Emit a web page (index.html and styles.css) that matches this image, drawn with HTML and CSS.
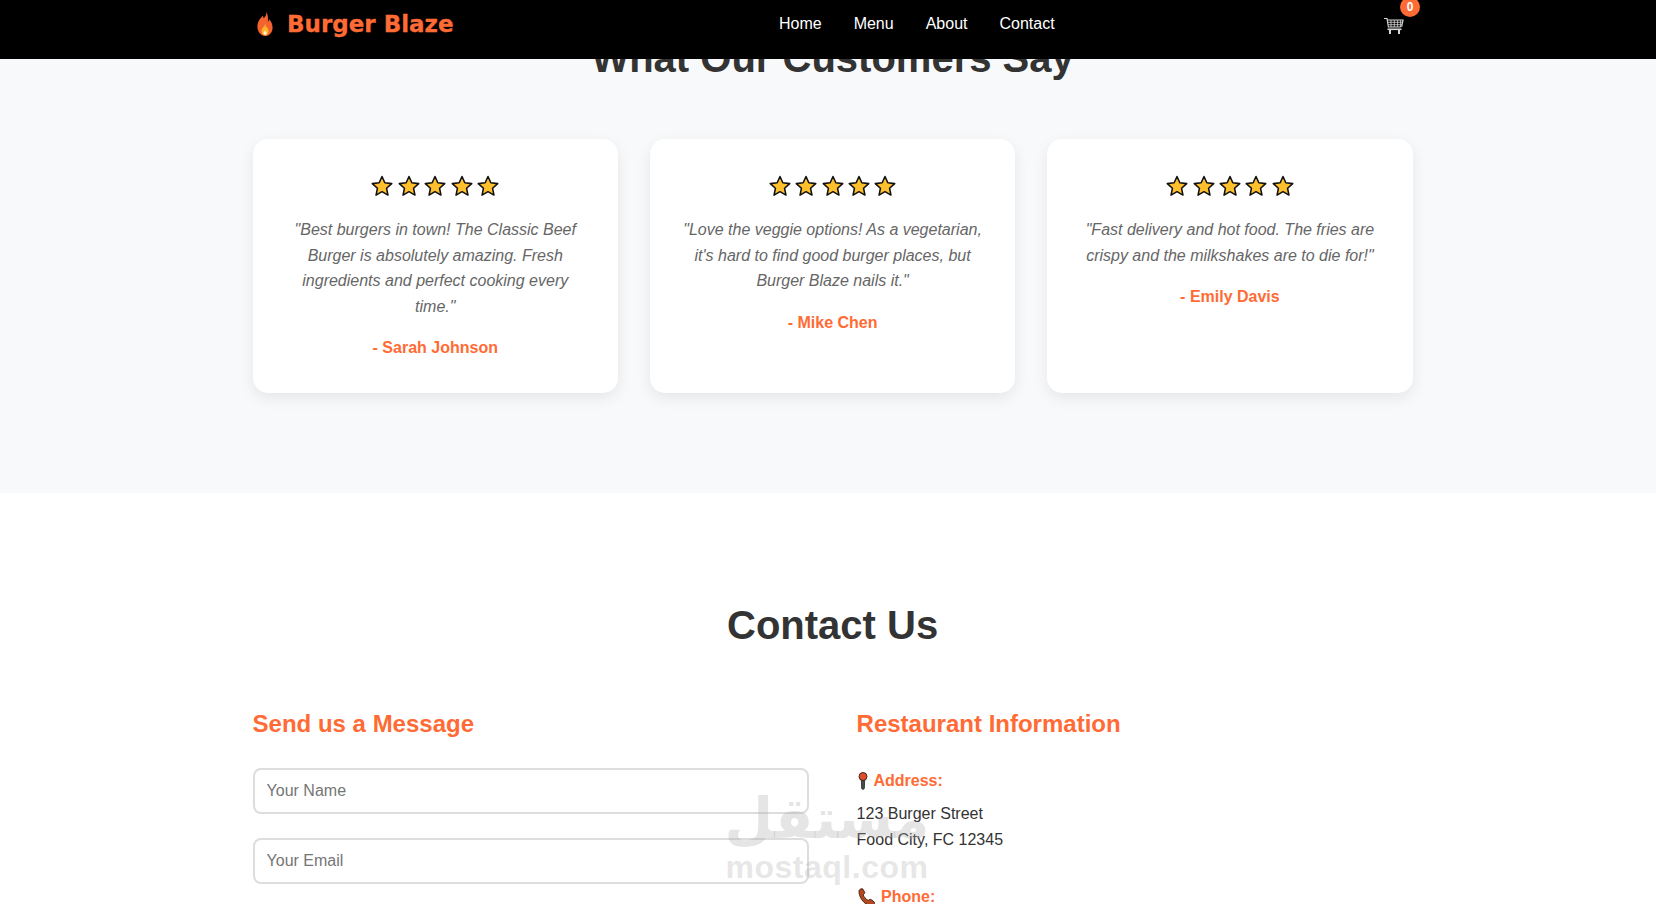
FILE: index.html
```html
<!DOCTYPE html>
<html lang="en">

<head>
    <meta charset="utf-8">
    <meta name="viewport" content="width=device-width, initial-scale=1.0">
    <title>Burger Blaze</title>
    <link rel="stylesheet" href="styles.css">
</head>

<body>
    <svg class="defs" width="0" height="0">
        <symbol id="star" viewBox="0 0 24 24">
            <path d="M12 1.6l3.1 6.9 7.5.9-5.6 5.1 1.500 7.4L12 18.2l-6.5 3.7L7 14.5 1.4 9.4l7.5-.9z" fill="#ffc02e" stroke="#111" stroke-width="1.7" stroke-linejoin="round" />
        </symbol>
    </svg>

    <header>
        <div class="bar">
            <a class="logo" href="#">
                <svg class="flame" viewBox="0 0 16 24">
                    <path d="M9.2 0c.5 3-1 4.600-2.400 6.300C6.300 5.400 6 4.700 6 3.800 3 6.400.4 10 .4 14.600.4 20 3.900 24 8 24s7.600-3.600 7.600-8.600c0-3.700-1.700-6-3.300-8.200-.3 1.100-.7 1.900-1.400 2.500C11.200 6.200 11 2.600 9.200 0z" fill="#f4622d" />
                    <path d="M8.200 11.500c.2 2-1.900 3.100-3.200 5.600-1.200 2.500.3 6.100 3 6.100s4.300-2.900 3.300-5.500c-.5-1.300-1.200-2-1.600-3.100-.3.500-.6.800-1 1 .2-1.600 0-3-.5-4.100z" fill="#fdb72f" />
                    <path d="M8 18.500c-1 1.200-2 2.400-1.400 3.700.4.800 2.400.8 2.900 0 .6-1.300-.6-2.500-1.500-3.700z" fill="#fff3d2" />
                </svg>
                <span>Burger Blaze</span>
            </a>
            <nav>
                <a href="#">Home</a>
                <a href="#">Menu</a>
                <a href="#">About</a>
                <a href="#">Contact</a>
            </nav>
            <a class="cart" href="#">
                <svg class="cart-icon" viewBox="0 0 20 18" fill="none" stroke="#d6d6d6" stroke-width="1.200">
                    <path d="M0 1.500h3l1.400 8.500h12.400" />
                    <path d="M3.300 3h15.700l-1.400 6.800" />
                    <path d="M3.800 5.300h14.600M4.200 7.700h13.700M7 3v7M10.300 3v7M13.600 3v7M16.600 3v7" stroke-width=".8" />
                    <path d="M3.500 12.300h14" stroke-width="1.600" />
                    <path d="M6 12.500v4.500M15 12.500v4.500" stroke-width="2" />
                </svg>
                <span class="badge">0</span>
            </a>
        </div>
    </header>

    <main>
        <section class="testimonials">
            <div class="wrap">
                <h2>What Our Customers Say</h2>
                <div class="cards">
                    <article class="card">
                        <div class="stars">
                            <svg><use href="#star" /></svg>
                            <svg><use href="#star" /></svg>
                            <svg><use href="#star" /></svg>
                            <svg><use href="#star" /></svg>
                            <svg><use href="#star" /></svg>
                        </div>
                        <p class="quote">"Best burgers in town! The Classic Beef Burger is absolutely amazing. Fresh ingredients and perfect cooking every time."</p>
                        <p class="author">- Sarah Johnson</p>
                    </article>
                    <article class="card">
                        <div class="stars">
                            <svg><use href="#star" /></svg>
                            <svg><use href="#star" /></svg>
                            <svg><use href="#star" /></svg>
                            <svg><use href="#star" /></svg>
                            <svg><use href="#star" /></svg>
                        </div>
                        <p class="quote">"Love the veggie options! As a vegetarian, it's hard to find good burger places, but Burger Blaze nails it."</p>
                        <p class="author">- Mike Chen</p>
                    </article>
                    <article class="card">
                        <div class="stars">
                            <svg><use href="#star" /></svg>
                            <svg><use href="#star" /></svg>
                            <svg><use href="#star" /></svg>
                            <svg><use href="#star" /></svg>
                            <svg><use href="#star" /></svg>
                        </div>
                        <p class="quote">"Fast delivery and hot food. The fries are crispy and the milkshakes are to die for!"</p>
                        <p class="author">- Emily Davis</p>
                    </article>
                </div>
            </div>
        </section>

        <section class="contact">
            <div class="wrap">
                <h2>Contact Us</h2>
                <div class="columns">
                    <form>
                        <h3>Send us a Message</h3>
                        <input type="text" placeholder="Your Name">
                        <input type="email" placeholder="Your Email">
                    </form>
                    <div class="info">
                        <h3>Restaurant Information</h3>
                        <div class="info-block">
                            <p class="label">
                                <svg class="pin" viewBox="0 0 10 18">
                                    <path d="M3.300 7.500h3.400l-.4 9c0 1-2.600 1-2.600 0z" fill="#4c4a50" stroke="#222" stroke-width=".8" />
                                    <circle cx="5" cy="4.500" r="4" fill="#d9512c" stroke="#3a1c14" stroke-width=".9" />
                                </svg>
                                Address:
                            </p>
                            <p>123 Burger Street<br>Food City, FC 12345</p>
                        </div>
                        <div class="info-block">
                            <p class="label">
                                <svg class="phone" viewBox="0 0 18 18">
                                    <path d="M1.200 2.200C2 .9 4 .3 5 1.200l1.700 3.200c.3.700-.2 1.300-1.500 2.300.8 2.300 2.400 4.300 5 5.800 1-1 1.900-1.400 2.700-1l3.100 2.200c1 .8.600 2.700-.6 3.600-1.700 1.200-4.900.5-8.200-2C3.500 12.600.2 6.500 1.200 2.200z" fill="#b5481f" stroke="#3a1a0c" stroke-width=".9" />
                                </svg>
                                Phone:
                            </p>
                            <p>(555) 123-BURGER</p>
                        </div>
                    </div>
                </div>
            </div>
            <div class="watermark">
                <span class="wm-ar" lang="ar" dir="rtl">مستقل</span>
                <span class="wm-en">mostaql.com</span>
            </div>
        </section>
    </main>
</body>

</html>
```

FILE: styles.css
```css
* {
    margin: 0;
    padding: 0;
    box-sizing: border-box;
}

html,
body {
    height: 904px;
    overflow: hidden;
}

body {
    font-family: "Liberation Sans", Arial, sans-serif;
    line-height: 1.6;
    color: #333;
    background-color: #fff;
}

.defs {
    position: absolute;
}

a {
    color: inherit;
    text-decoration: none;
}

/* sticky bar, the page is scrolled under it */
header {
    position: fixed;
    top: 0;
    left: 0;
    right: 0;
    z-index: 10;
    height: 59px;
    background-color: #000;
    padding-left: 10px;
}

.bar {
    width: 1160px;
    height: 48px;
    margin: auto;
    display: flex;
    justify-content: space-between;
    align-items: center;
}

.logo {
    display: flex;
    align-items: center;
    gap: 14px;
    padding-left: 4px;
    color: #ff6b35;
    font-family: "DejaVu Sans", sans-serif;
    font-size: 23px;
    font-weight: bold;
    -webkit-text-stroke: .3px #ff6b35;
}

.logo span {
    margin-top: 1px;
}

.flame {
    width: 16px;
    height: 24px;
}

nav {
    display: flex;
    gap: 32px;
    margin-top: 0;
    color: #fff;
    font-size: 16px;
}

.cart {
    position: relative;
    display: block;
    width: 33px;
    height: 24px;
    margin-top: 6px;
}

.cart-icon {
    position: absolute;
    left: 4px;
    top: 2px;
    width: 20px;
    height: 18px;
}

.badge {
    position: absolute;
    left: 20px;
    top: -18px;
    width: 20px;
    height: 20px;
    border-radius: 50%;
    background-color: #ff6b35;
    color: #fff;
    font-size: 12px;
    font-weight: bold;
    line-height: 20px;
    text-align: center;
}

main {
    margin-top: -74px;
}

section {
    padding: 100px 0;
}

.wrap {
    width: 1160px;
    margin-left: 252.6px;
}

.testimonials {
    background-color: #f8f9fa;
}

.contact {
    position: relative;
    padding-top: 100px;
}

h2 {
    margin-bottom: 48px;
    font-size: 40px;
    text-align: center;
    color: #333;
}

.testimonials h2 {
    margin-bottom: 49px;
}

.cards {
    display: grid;
    grid-template-columns: repeat(3, 1fr);
    gap: 32px;
}

.card {
    padding: 32px;
    background-color: #fff;
    border-radius: 15px;
    box-shadow: 0 5px 15px rgba(0, 0, 0, 0.08);
    text-align: center;
}

.stars {
    display: flex;
    justify-content: center;
    gap: 4.4px;
    height: 30px;
    margin-bottom: 16px;
    padding-top: 4px;
}

.stars svg {
    width: 22px;
    height: 22px;
}

.quote {
    margin-bottom: 16px;
    font-style: italic;
    color: #666;
}

.author {
    font-weight: bold;
    color: #ff6b35;
}

.columns {
    display: grid;
    grid-template-columns: 1fr 1fr;
    gap: 48px;
}

h3 {
    margin-bottom: 25px;
    font-size: 24px;
    color: #ff6b35;
}

input {
    display: block;
    width: 100%;
    margin-bottom: 24px;
    padding: 12px;
    border: 2px solid #ddd;
    border-radius: 8px;
    font-family: inherit;
    font-size: 16px;
}

.info-block {
    margin-bottom: 31px;
}

.label {
    margin-bottom: 7.4px;
    font-weight: bold;
    color: #ff6b35;
}

.pin {
    width: 10px;
    height: 18px;
    margin-left: 1px;
    margin-right: 2px;
    vertical-align: -4px;
}

.phone {
    width: 18px;
    height: 18px;
    margin-left: 1px;
    margin-right: 1px;
    vertical-align: -4px;
}

/* site stamp over the picture */
.watermark {
    position: absolute;
    left: 727px;
    top: 296px;
    width: 200px;
    display: flex;
    flex-direction: column;
    align-items: center;
    color: rgba(170, 170, 170, 0.3);
    font-weight: bold;
    pointer-events: none;
}

.wm-ar {
    font-family: "DejaVu Sans", sans-serif;
    font-size: 56px;
    line-height: 60px;
}

.wm-en {
    margin-top: -2px;
    font-size: 32px;
    line-height: 40px;
    letter-spacing: .5px;
}
```
